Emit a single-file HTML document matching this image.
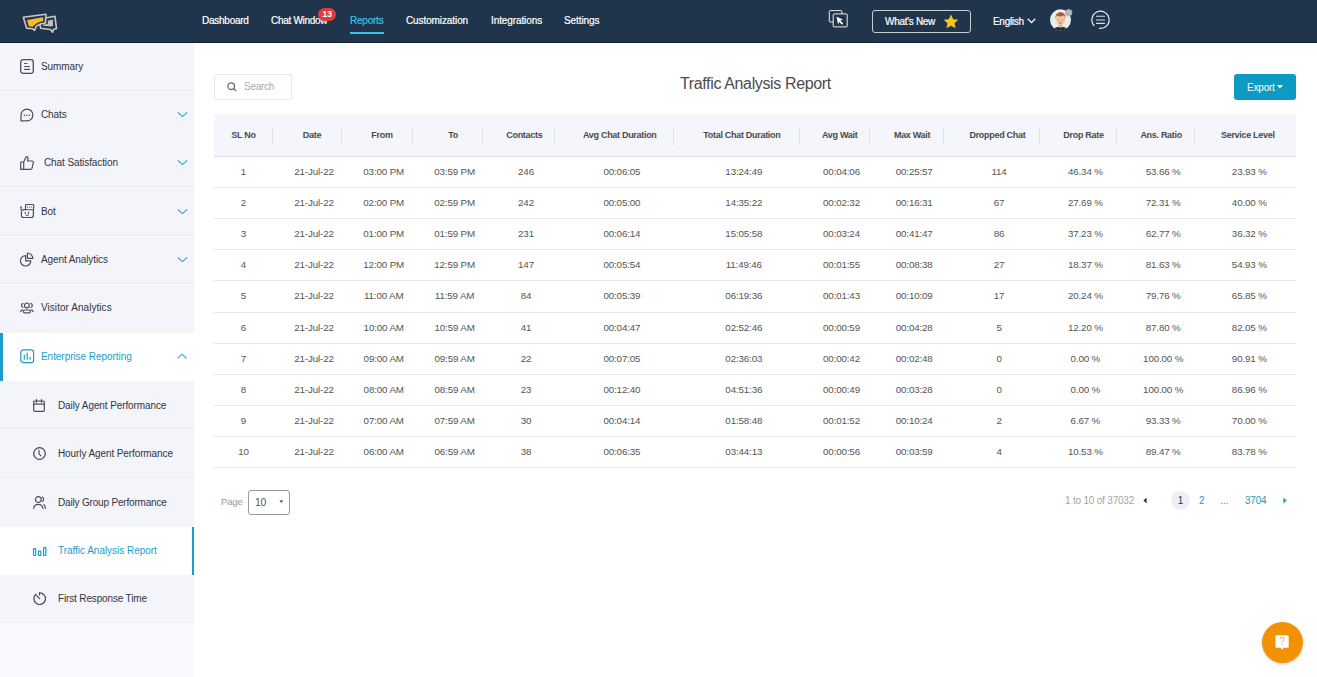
<!DOCTYPE html>
<html><head><meta charset="utf-8">
<style>
*{margin:0;padding:0;box-sizing:border-box}
html,body{width:1317px;height:677px;overflow:hidden;background:#fff;font-family:"Liberation Sans",sans-serif}
.a{position:absolute}
.nav{top:15.2px;font-size:10px;letter-spacing:-0.1px;color:#fff;line-height:12px;white-space:nowrap;-webkit-text-stroke:0.2px currentColor}
.st{font-size:10px;color:#3a3a46;white-space:nowrap;line-height:12px;letter-spacing:-0.1px}
.th{top:130px;font-size:9px;font-weight:bold;color:#4a4a4a;line-height:11px;letter-spacing:-0.3px;white-space:nowrap;width:200px;text-align:center}
.td{font-size:9.8px;letter-spacing:-0.15px;color:#555;line-height:11px;white-space:nowrap;width:200px;text-align:center}
.dv{top:128px;width:1px;height:17px;background:#e2e2e6}
.hl{left:214px;width:1082px;height:1px;background:#e6e6e6}
</style></head><body>
<div class="a" style="left:0;top:0;width:1317px;height:42px;background:#20354b"></div>
<div class="a" style="left:0;top:42px;width:1317px;height:1px;background:#0d2136"></div>
<div class="a nav" style="left:202px;letter-spacing:-0.25px;">Dashboard</div>
<div class="a nav" style="left:271px;letter-spacing:-0.3px;">Chat Window</div>
<div class="a nav" style="left:350px;color:#33c3e8;letter-spacing:-0.23px;">Reports</div>
<div class="a nav" style="left:406px;">Customization</div>
<div class="a nav" style="left:491px;">Integrations</div>
<div class="a nav" style="left:564px;">Settings</div>
<div class="a" style="left:350px;top:32px;width:34px;height:2px;background:#33c3e8"></div>
<div class="a" style="left:318px;top:8px;width:18px;height:13px;border-radius:7px;background:#e53a3a;color:#fff;font-size:9px;font-weight:bold;text-align:center;line-height:13px;letter-spacing:-0.3px">13</div>
<svg class="a" style="left:18px;top:8px" width="44" height="30" viewBox="0 0 993 677" fill="none" stroke-linejoin="round"><path d="M120 210L630 140L635 340L500 372L420 400L372 505L330 468L195 455Z" fill="#20354b" stroke="#c8c8c8" stroke-width="36"/><path d="M205 272L565 208L570 292L470 322L400 362L330 425L240 405Z" fill="#fbb828"/><path d="M621 226L833 185L869 465L801 485L781 546L734 485L510 458L497 361L621 339Z" fill="#20354b" stroke="#c8c8c8" stroke-width="36"/><path d="M673 289L785 260L794 402L756 417L564 402L564 375L673 361Z" fill="#c0c0c0"/></svg>
<svg class="a" style="left:827px;top:9px" width="22" height="20" viewBox="0 0 22 20" fill="none"><rect x="2.3" y="1.6" width="12.6" height="11.4" rx="0.9" stroke="#ece8dc" stroke-width="1"/><rect x="6.2" y="4.9" width="14" height="13" rx="0.9" fill="#20354b" stroke="#f0f0f2" stroke-width="1"/><path d="M9.5 7.8L16 10.6L13.3 11.6L16.2 14.5L15 15.7L12.1 12.8L11.1 15.5Z" fill="#fff"/></svg>
<div class="a" style="left:872px;top:10px;width:99px;height:23px;border:1.3px solid #c9cdd2;border-radius:3px"></div>
<div class="a nav" style="left:885px;top:15.5px;letter-spacing:-0.3px">What&#39;s New</div>
<svg class="a" style="left:943px;top:14px" width="16" height="15" viewBox="0 0 24 23"><path d="M12 0.8l3.4 7.2 7.8 0.9-5.8 5.3 1.6 7.8L12 18.1 5 22l1.6-7.8L0.8 8.9l7.8-0.9z" fill="#f6c61c"/></svg>
<div class="a nav" style="left:993px;top:16px;letter-spacing:-0.3px">English</div>
<svg class="a" style="left:1027px;top:18px" width="9" height="6" viewBox="0 0 9 6" fill="none"><path d="M0.8 0.8L4.5 4.6L8.2 0.8" stroke="#fff" stroke-width="1.3"/></svg>
<svg class="a" style="left:1048px;top:8px" width="26" height="23" viewBox="0 0 26 23"><defs><clipPath id="av"><circle cx="12.5" cy="11.8" r="10.5"/></clipPath></defs><circle cx="12.5" cy="11.8" r="10.5" fill="#ececec"/><g clip-path="url(#av)"><path d="M4 24c0.5-3.5 3.8-5.2 8.5-5.2s8 1.7 8.5 5.2z" fill="#262a38"/><rect x="10.6" y="15" width="3.8" height="4.5" fill="#e2b48c"/><ellipse cx="12.5" cy="11.6" rx="4.6" ry="5.6" fill="#f1c9a2"/><path d="M7.6 11.2c-0.6-4.6 1.6-7 4.9-7s5.5 2.4 4.9 7c-0.3-1.8-1-3.2-2-3.6c-1 0.6-2.3 0.8-3.2 0.8s-2.2-0.3-3-0.9c-0.9 0.6-1.4 1.9-1.6 3.7z" fill="#a85a3a"/><circle cx="10.6" cy="12" r="0.5" fill="#5a4a40"/><circle cx="14.4" cy="12" r="0.5" fill="#5a4a40"/><rect x="11.2" y="14.6" width="2.6" height="0.9" rx="0.4" fill="#9a4a4a"/></g><circle cx="20.8" cy="4.6" r="3.4" fill="#b9b9b9" stroke="#9c8878" stroke-width="0.4"/></svg>
<svg class="a" style="left:1090px;top:9px" width="21" height="21" viewBox="0 0 21 21" fill="none"><path d="M4 16.5A8.6 8.6 0 1 1 9.5 19.4" stroke="#e8eaf0" stroke-width="1.2" stroke-linecap="round"/><path d="M6.5 7.3h8M6.5 11h8M6.5 14.4h8" stroke="#d8dae0" stroke-width="1.1" stroke-linecap="round"/></svg>
<div class="a" style="left:0;top:43px;width:194px;height:634px;background:#f9fafd"></div>
<div class="a" style="left:0;width:194px;top:43px;height:48px;background:#f4f5fb;border-bottom:1px solid #e9eaf0;"></div>
<svg class="a" style="left:20px;top:59px" width="14" height="15" viewBox="0 0 14 15" fill="none" stroke-linecap="round" stroke-linejoin="round"><rect x="0.7" y="0.7" width="12.6" height="13.6" rx="2.5" stroke="#4d4d55" stroke-width="1.3"/><path d="M4.5 4.5h2.5M4.5 7.5h5M4.5 10.3h5" stroke="#4d4d55" stroke-width="1.2"/></svg>
<div class="a st" style="left:41px;top:61px;color:#33333f;">Summary</div>
<div class="a" style="left:0;width:194px;top:92px;height:47px;background:#f4f5fb;"></div>
<svg class="a" style="left:20px;top:108px" width="14" height="14" viewBox="0 0 14 14" fill="none" stroke-linecap="round" stroke-linejoin="round"><path d="M1 7A5.95 5.95 0 1 1 7 12.95C5.5 12.95 4.5 12.6 3.5 12.8H1z" stroke="#4d4d55" stroke-width="1.2"/><circle cx="4.4" cy="7.2" r="0.75" fill="#4d4d55"/><circle cx="6.85" cy="7.2" r="0.75" fill="#4d4d55"/><circle cx="9.3" cy="7.2" r="0.75" fill="#4d4d55"/></svg>
<div class="a st" style="left:41px;top:109px;color:#33333f;">Chats</div>
<svg class="a" style="left:176.5px;top:111px" width="11" height="8" viewBox="0 0 11 8" fill="none"><path d="M0.8 1.4L5.5 5.6L10.2 1.4" stroke="#2f9fcc" stroke-width="1.1"/></svg>
<div class="a" style="left:0;width:194px;top:139px;height:48px;background:#f4f5fb;border-bottom:1px solid #e9eaf0;"></div>
<svg class="a" style="left:20px;top:155px" width="14" height="15" viewBox="0 0 14 15" fill="none" stroke-linecap="round" stroke-linejoin="round"><path d="M0.7 7h3v7.3h-3zM3.7 7l2.6-5.5c1.3 0 2 0.9 1.7 2.3L7.5 6h4.6c0.9 0 1.4 0.8 1.2 1.6l-1.2 5.5c-0.2 0.8-0.8 1.2-1.5 1.2H3.7" stroke="#4d4d55" stroke-width="1.2"/></svg>
<div class="a st" style="left:44px;top:157px;color:#33333f;">Chat Satisfaction</div>
<svg class="a" style="left:176.5px;top:159px" width="11" height="8" viewBox="0 0 11 8" fill="none"><path d="M0.8 1.4L5.5 5.6L10.2 1.4" stroke="#2f9fcc" stroke-width="1.1"/></svg>
<div class="a" style="left:0;width:194px;top:188px;height:48px;background:#f4f5fb;border-bottom:1px solid #e9eaf0;"></div>
<svg class="a" style="left:20px;top:204px" width="15" height="14" viewBox="0 0 15 14" fill="none" stroke-linecap="round" stroke-linejoin="round"><rect x="5.5" y="0.5" width="8.2" height="5.2" rx="0.9" stroke="#4d4d55" stroke-width="1.1"/><circle cx="7.5" cy="3.1" r="0.6" fill="#4d4d55"/><circle cx="9.6" cy="3.1" r="0.6" fill="#4d4d55"/><circle cx="11.7" cy="3.1" r="0.6" fill="#4d4d55"/><path d="M5.5 5.6H3.8a2.4 2.4 0 0 0-2.4 2.4v3.3a2.4 2.4 0 0 0 2.4 2.4h7.2a2.4 2.4 0 0 0 2.4-2.4V5.7" stroke="#4d4d55" stroke-width="1.2"/><path d="M1 3.2v2.6M5.3 8.4v1.2M8.6 8.4v1.2M6.3 11.2h1.9" stroke="#4d4d55" stroke-width="1.1"/><circle cx="1" cy="3" r="0.8" fill="#4d4d55"/></svg>
<div class="a st" style="left:41px;top:206px;color:#33333f;">Bot</div>
<svg class="a" style="left:176.5px;top:208px" width="11" height="8" viewBox="0 0 11 8" fill="none"><path d="M0.8 1.4L5.5 5.6L10.2 1.4" stroke="#2f9fcc" stroke-width="1.1"/></svg>
<div class="a" style="left:0;width:194px;top:237px;height:47px;background:#f4f5fb;border-bottom:1px solid #e9eaf0;"></div>
<svg class="a" style="left:20px;top:252px" width="15" height="15" viewBox="0 0 15 15" fill="none" stroke-linecap="round" stroke-linejoin="round"><path d="M5.6 3.6A5.2 5.2 0 1 0 10.8 8.8H5.6z" stroke="#4d4d55" stroke-width="1.2"/><path d="M7.4 1A5.4 5.4 0 0 1 12.8 6.4H7.4z" stroke="#4d4d55" stroke-width="1.2"/></svg>
<div class="a st" style="left:41px;top:254px;color:#33333f;">Agent Analytics</div>
<svg class="a" style="left:176.5px;top:256px" width="11" height="8" viewBox="0 0 11 8" fill="none"><path d="M0.8 1.4L5.5 5.6L10.2 1.4" stroke="#2f9fcc" stroke-width="1.1"/></svg>
<div class="a" style="left:0;width:194px;top:285px;height:48px;background:#f4f5fb;"></div>
<svg class="a" style="left:20px;top:301px" width="14" height="13" viewBox="0 0 14 13" fill="none" stroke-linecap="round" stroke-linejoin="round"><circle cx="6.9" cy="4.4" r="2.4" stroke="#4d4d55" stroke-width="1.2"/><rect x="3.4" y="9" width="7" height="2.9" rx="1.45" stroke="#4d4d55" stroke-width="1.2"/><path d="M2.9 2.4a2.2 2.2 0 0 0 0 4.1M10.9 2.4a2.2 2.2 0 0 1 0 4.1M0.7 10.6c0.2-0.9 0.9-1.5 1.8-1.7M13.1 10.6c-0.2-0.9-0.9-1.5-1.8-1.7" stroke="#4d4d55" stroke-width="1.2"/></svg>
<div class="a st" style="left:41px;top:302px;color:#33333f;letter-spacing:0.05px;">Visitor Analytics</div>
<div class="a" style="left:0;width:194px;top:333px;height:48px;background:#ffffff;"></div>
<svg class="a" style="left:20px;top:349px" width="15" height="15" viewBox="0 0 15 15" fill="none" stroke-linecap="round" stroke-linejoin="round"><rect x="0.8" y="0.8" width="12.8" height="12.9" rx="2.8" stroke="#1c9dc9" stroke-width="1.2"/><path d="M4.3 5.8v5M7.2 3.8v7M10.1 8v2.8" stroke="#1c9dc9" stroke-width="1.2" stroke-linecap="butt"/></svg>
<div class="a st" style="left:41px;top:351px;color:#1c9dc9;letter-spacing:-0.05px;">Enterprise Reporting</div>
<svg class="a" style="left:177px;top:352px" width="11" height="8" viewBox="0 0 11 8" fill="none"><path d="M0.5 6.3L5 2.2L9.5 6.3" stroke="#2a9fcc" stroke-width="1.1"/></svg>
<div class="a" style="left:0;width:194px;top:381px;height:48px;background:#f4f5fb;border-bottom:1px solid #e9eaf0;"></div>
<svg class="a" style="left:33px;top:399px" width="12" height="13" viewBox="0 0 12 13" fill="none" stroke-linecap="round" stroke-linejoin="round"><rect x="0.7" y="2" width="10.6" height="10.3" rx="1" stroke="#4d4d55" stroke-width="1.2"/><path d="M0.7 5.2h10.6M3.5 0.6v2.6M8.5 0.6v2.6" stroke="#4d4d55" stroke-width="1.2"/></svg>
<div class="a st" style="left:58px;top:400px;color:#33333f;">Daily Agent Performance</div>
<div class="a" style="left:0;width:194px;top:430px;height:48px;background:#f4f5fb;border-bottom:1px solid #e9eaf0;"></div>
<svg class="a" style="left:33px;top:447px" width="13" height="13" viewBox="0 0 13 13" fill="none" stroke-linecap="round" stroke-linejoin="round"><circle cx="6.5" cy="6.5" r="5.8" stroke="#4d4d55" stroke-width="1.3"/><path d="M6 3.2v3.6l2 2" stroke="#4d4d55" stroke-width="1.2"/></svg>
<div class="a st" style="left:58px;top:448px;color:#33333f;">Hourly Agent Performance</div>
<div class="a" style="left:0;width:194px;top:479px;height:48px;background:#f4f5fb;"></div>
<svg class="a" style="left:33px;top:496px" width="13" height="13" viewBox="0 0 13 13" fill="none" stroke-linecap="round" stroke-linejoin="round"><circle cx="5.3" cy="3.6" r="2.9" stroke="#4d4d55" stroke-width="1.2"/><path d="M0.7 12.3c0.3-2.4 2.2-4 4.6-4s4.3 1.6 4.6 4" stroke="#4d4d55" stroke-width="1.2"/><path d="M9.2 1a2.5 2.5 0 0 1 0 4.5M11 8.6c0.8 0.7 1.2 2 1.3 3.7" stroke="#4d4d55" stroke-width="1.2"/></svg>
<div class="a st" style="left:58px;top:497px;color:#33333f;letter-spacing:-0.18px;">Daily Group Performance</div>
<div class="a" style="left:0;width:194px;top:527px;height:48px;background:#ffffff;"></div>
<svg class="a" style="left:32px;top:547px" width="15" height="10" viewBox="0 0 15 10" fill="none" stroke-linecap="round" stroke-linejoin="round"><rect x="1.5" y="1.6" width="2.2" height="6.9" rx="0.4" stroke="#1c9dc9" stroke-width="1.2"/><rect x="6.5" y="4.2" width="2.4" height="4.3" rx="0.4" stroke="#1c9dc9" stroke-width="1.2"/><rect x="11.6" y="0.6" width="2.3" height="7.9" rx="0.4" stroke="#1c9dc9" stroke-width="1.2"/></svg>
<div class="a st" style="left:58px;top:545px;color:#1c9dc9;letter-spacing:-0.03px;">Traffic Analysis Report</div>
<div class="a" style="left:0;width:194px;top:575px;height:48px;background:#f4f5fb;"></div>
<svg class="a" style="left:33px;top:592px" width="13" height="13" viewBox="0 0 13 13" fill="none" stroke-linecap="round" stroke-linejoin="round"><path d="M3 2.2A5.8 5.8 0 1 0 6.5 0.9" stroke="#4d4d55" stroke-width="1.3"/><path d="M3.7 3.8l3 2.8M6.5 0.9v2" stroke="#4d4d55" stroke-width="1.2"/></svg>
<div class="a st" style="left:58px;top:593px;color:#33333f;letter-spacing:-0.15px;">First Response Time</div>
<div class="a" style="left:0;top:333px;width:3px;height:48px;background:#1c9dc9"></div>
<div class="a" style="left:192px;top:527px;width:2px;height:48px;background:#1c9dc9"></div>
<div class="a" style="left:214px;top:74px;width:78px;height:26px;border:1px solid #e6e6e6;border-radius:2px"></div>
<svg class="a" style="left:227px;top:82px" width="10" height="10" viewBox="0 0 10 10" fill="none"><circle cx="4.2" cy="4.2" r="3.3" stroke="#6a6a6a" stroke-width="1.3"/><path d="M6.6 6.6L8.9 8.9" stroke="#6a6a6a" stroke-width="1.3" stroke-linecap="round"/></svg>
<div class="a" style="left:244px;top:81px;font-size:10px;color:#aaa;line-height:11px;letter-spacing:-0.25px">Search</div>
<div class="a" style="left:680px;top:75px;font-size:16px;letter-spacing:-0.36px;color:#4c4c4c;line-height:17px;white-space:nowrap">Traffic Analysis Report</div>
<div class="a" style="left:1234px;top:74px;width:62px;height:26px;background:#0e9bc3;border-radius:3px"></div>
<div class="a" style="left:1247px;top:82px;font-size:10px;color:#fff;line-height:12px;letter-spacing:-0.2px">Export</div>
<svg class="a" style="left:1277px;top:85px" width="6" height="4" viewBox="0 0 6 4"><path d="M0 0h6L3 3.6z" fill="#fff"/></svg>
<div class="a" style="left:214px;top:114px;width:1082px;height:42px;background:#f4f6fb"></div>
<div class="a hl" style="top:156px;background:#dcdcdc"></div>
<div class="a th" style="left:143.5px">SL No</div>
<div class="a th" style="left:212.0px">Date</div>
<div class="a th" style="left:282.0px">From</div>
<div class="a th" style="left:353.2px">To</div>
<div class="a th" style="left:424.3px">Contacts</div>
<div class="a th" style="left:519.8px">Avg Chat Duration</div>
<div class="a th" style="left:641.9px">Total Chat Duration</div>
<div class="a th" style="left:739.7px">Avg Wait</div>
<div class="a th" style="left:812.1px">Max Wait</div>
<div class="a th" style="left:897.4px">Dropped Chat</div>
<div class="a th" style="left:983.5px">Drop Rate</div>
<div class="a th" style="left:1061.2px">Ans. Ratio</div>
<div class="a th" style="left:1147.8px">Service Level</div>
<div class="a dv" style="left:272px"></div>
<div class="a dv" style="left:341px"></div>
<div class="a dv" style="left:412px"></div>
<div class="a dv" style="left:482px"></div>
<div class="a dv" style="left:554px"></div>
<div class="a dv" style="left:673px"></div>
<div class="a dv" style="left:799px"></div>
<div class="a dv" style="left:869px"></div>
<div class="a dv" style="left:943px"></div>
<div class="a dv" style="left:1039px"></div>
<div class="a dv" style="left:1116px"></div>
<div class="a dv" style="left:1194px"></div>
<div class="a td" style="left:143.5px;top:166px">1</div>
<div class="a td" style="left:214.0px;top:166px">21-Jul-22</div>
<div class="a td" style="left:283.7px;top:166px">03:00 PM</div>
<div class="a td" style="left:354.6px;top:166px">03:59 PM</div>
<div class="a td" style="left:426.0px;top:166px">246</div>
<div class="a td" style="left:521.9px;top:166px">00:06:05</div>
<div class="a td" style="left:643.8px;top:166px">13:24:49</div>
<div class="a td" style="left:741.5px;top:166px">00:04:06</div>
<div class="a td" style="left:814.2px;top:166px">00:25:57</div>
<div class="a td" style="left:899.1px;top:166px">114</div>
<div class="a td" style="left:985.4px;top:166px">46.34 %</div>
<div class="a td" style="left:1063.2px;top:166px">53.66 %</div>
<div class="a td" style="left:1149.3px;top:166px">23.93 %</div>
<div class="a hl" style="top:187px"></div>
<div class="a td" style="left:143.5px;top:197px">2</div>
<div class="a td" style="left:214.0px;top:197px">21-Jul-22</div>
<div class="a td" style="left:283.7px;top:197px">02:00 PM</div>
<div class="a td" style="left:354.6px;top:197px">02:59 PM</div>
<div class="a td" style="left:426.0px;top:197px">242</div>
<div class="a td" style="left:521.9px;top:197px">00:05:00</div>
<div class="a td" style="left:643.8px;top:197px">14:35:22</div>
<div class="a td" style="left:741.5px;top:197px">00:02:32</div>
<div class="a td" style="left:814.2px;top:197px">00:16:31</div>
<div class="a td" style="left:899.1px;top:197px">67</div>
<div class="a td" style="left:985.4px;top:197px">27.69 %</div>
<div class="a td" style="left:1063.2px;top:197px">72.31 %</div>
<div class="a td" style="left:1149.3px;top:197px">40.00 %</div>
<div class="a hl" style="top:218px"></div>
<div class="a td" style="left:143.5px;top:228px">3</div>
<div class="a td" style="left:214.0px;top:228px">21-Jul-22</div>
<div class="a td" style="left:283.7px;top:228px">01:00 PM</div>
<div class="a td" style="left:354.6px;top:228px">01:59 PM</div>
<div class="a td" style="left:426.0px;top:228px">231</div>
<div class="a td" style="left:521.9px;top:228px">00:06:14</div>
<div class="a td" style="left:643.8px;top:228px">15:05:58</div>
<div class="a td" style="left:741.5px;top:228px">00:03:24</div>
<div class="a td" style="left:814.2px;top:228px">00:41:47</div>
<div class="a td" style="left:899.1px;top:228px">86</div>
<div class="a td" style="left:985.4px;top:228px">37.23 %</div>
<div class="a td" style="left:1063.2px;top:228px">62.77 %</div>
<div class="a td" style="left:1149.3px;top:228px">36.32 %</div>
<div class="a hl" style="top:249px"></div>
<div class="a td" style="left:143.5px;top:259px">4</div>
<div class="a td" style="left:214.0px;top:259px">21-Jul-22</div>
<div class="a td" style="left:283.7px;top:259px">12:00 PM</div>
<div class="a td" style="left:354.6px;top:259px">12:59 PM</div>
<div class="a td" style="left:426.0px;top:259px">147</div>
<div class="a td" style="left:521.9px;top:259px">00:05:54</div>
<div class="a td" style="left:643.8px;top:259px">11:49:46</div>
<div class="a td" style="left:741.5px;top:259px">00:01:55</div>
<div class="a td" style="left:814.2px;top:259px">00:08:38</div>
<div class="a td" style="left:899.1px;top:259px">27</div>
<div class="a td" style="left:985.4px;top:259px">18.37 %</div>
<div class="a td" style="left:1063.2px;top:259px">81.63 %</div>
<div class="a td" style="left:1149.3px;top:259px">54.93 %</div>
<div class="a hl" style="top:280px"></div>
<div class="a td" style="left:143.5px;top:290px">5</div>
<div class="a td" style="left:214.0px;top:290px">21-Jul-22</div>
<div class="a td" style="left:283.7px;top:290px">11:00 AM</div>
<div class="a td" style="left:354.6px;top:290px">11:59 AM</div>
<div class="a td" style="left:426.0px;top:290px">84</div>
<div class="a td" style="left:521.9px;top:290px">00:05:39</div>
<div class="a td" style="left:643.8px;top:290px">06:19:36</div>
<div class="a td" style="left:741.5px;top:290px">00:01:43</div>
<div class="a td" style="left:814.2px;top:290px">00:10:09</div>
<div class="a td" style="left:899.1px;top:290px">17</div>
<div class="a td" style="left:985.4px;top:290px">20.24 %</div>
<div class="a td" style="left:1063.2px;top:290px">79.76 %</div>
<div class="a td" style="left:1149.3px;top:290px">65.85 %</div>
<div class="a hl" style="top:312px"></div>
<div class="a td" style="left:143.5px;top:322px">6</div>
<div class="a td" style="left:214.0px;top:322px">21-Jul-22</div>
<div class="a td" style="left:283.7px;top:322px">10:00 AM</div>
<div class="a td" style="left:354.6px;top:322px">10:59 AM</div>
<div class="a td" style="left:426.0px;top:322px">41</div>
<div class="a td" style="left:521.9px;top:322px">00:04:47</div>
<div class="a td" style="left:643.8px;top:322px">02:52:46</div>
<div class="a td" style="left:741.5px;top:322px">00:00:59</div>
<div class="a td" style="left:814.2px;top:322px">00:04:28</div>
<div class="a td" style="left:899.1px;top:322px">5</div>
<div class="a td" style="left:985.4px;top:322px">12.20 %</div>
<div class="a td" style="left:1063.2px;top:322px">87.80 %</div>
<div class="a td" style="left:1149.3px;top:322px">82.05 %</div>
<div class="a hl" style="top:343px"></div>
<div class="a td" style="left:143.5px;top:353px">7</div>
<div class="a td" style="left:214.0px;top:353px">21-Jul-22</div>
<div class="a td" style="left:283.7px;top:353px">09:00 AM</div>
<div class="a td" style="left:354.6px;top:353px">09:59 AM</div>
<div class="a td" style="left:426.0px;top:353px">22</div>
<div class="a td" style="left:521.9px;top:353px">00:07:05</div>
<div class="a td" style="left:643.8px;top:353px">02:36:03</div>
<div class="a td" style="left:741.5px;top:353px">00:00:42</div>
<div class="a td" style="left:814.2px;top:353px">00:02:48</div>
<div class="a td" style="left:899.1px;top:353px">0</div>
<div class="a td" style="left:985.4px;top:353px">0.00 %</div>
<div class="a td" style="left:1063.2px;top:353px">100.00 %</div>
<div class="a td" style="left:1149.3px;top:353px">90.91 %</div>
<div class="a hl" style="top:374px"></div>
<div class="a td" style="left:143.5px;top:384px">8</div>
<div class="a td" style="left:214.0px;top:384px">21-Jul-22</div>
<div class="a td" style="left:283.7px;top:384px">08:00 AM</div>
<div class="a td" style="left:354.6px;top:384px">08:59 AM</div>
<div class="a td" style="left:426.0px;top:384px">23</div>
<div class="a td" style="left:521.9px;top:384px">00:12:40</div>
<div class="a td" style="left:643.8px;top:384px">04:51:36</div>
<div class="a td" style="left:741.5px;top:384px">00:00:49</div>
<div class="a td" style="left:814.2px;top:384px">00:03:28</div>
<div class="a td" style="left:899.1px;top:384px">0</div>
<div class="a td" style="left:985.4px;top:384px">0.00 %</div>
<div class="a td" style="left:1063.2px;top:384px">100.00 %</div>
<div class="a td" style="left:1149.3px;top:384px">86.96 %</div>
<div class="a hl" style="top:405px"></div>
<div class="a td" style="left:143.5px;top:415px">9</div>
<div class="a td" style="left:214.0px;top:415px">21-Jul-22</div>
<div class="a td" style="left:283.7px;top:415px">07:00 AM</div>
<div class="a td" style="left:354.6px;top:415px">07:59 AM</div>
<div class="a td" style="left:426.0px;top:415px">30</div>
<div class="a td" style="left:521.9px;top:415px">00:04:14</div>
<div class="a td" style="left:643.8px;top:415px">01:58:48</div>
<div class="a td" style="left:741.5px;top:415px">00:01:52</div>
<div class="a td" style="left:814.2px;top:415px">00:10:24</div>
<div class="a td" style="left:899.1px;top:415px">2</div>
<div class="a td" style="left:985.4px;top:415px">6.67 %</div>
<div class="a td" style="left:1063.2px;top:415px">93.33 %</div>
<div class="a td" style="left:1149.3px;top:415px">70.00 %</div>
<div class="a hl" style="top:436px"></div>
<div class="a td" style="left:143.5px;top:446px">10</div>
<div class="a td" style="left:214.0px;top:446px">21-Jul-22</div>
<div class="a td" style="left:283.7px;top:446px">06:00 AM</div>
<div class="a td" style="left:354.6px;top:446px">06:59 AM</div>
<div class="a td" style="left:426.0px;top:446px">38</div>
<div class="a td" style="left:521.9px;top:446px">00:06:35</div>
<div class="a td" style="left:643.8px;top:446px">03:44:13</div>
<div class="a td" style="left:741.5px;top:446px">00:00:56</div>
<div class="a td" style="left:814.2px;top:446px">00:03:59</div>
<div class="a td" style="left:899.1px;top:446px">4</div>
<div class="a td" style="left:985.4px;top:446px">10.53 %</div>
<div class="a td" style="left:1063.2px;top:446px">89.47 %</div>
<div class="a td" style="left:1149.3px;top:446px">83.78 %</div>
<div class="a hl" style="top:467px"></div>
<div class="a" style="left:221px;top:496px;font-size:9.5px;color:#999;line-height:11px;letter-spacing:-0.15px">Page</div>
<div class="a" style="left:248px;top:490px;width:42px;height:25px;border:1px solid #9a9a9a;border-radius:3px"></div>
<div class="a" style="left:255px;top:497px;font-size:10.5px;color:#555;line-height:11px;letter-spacing:-0.3px">10</div>
<svg class="a" style="left:279px;top:500px" width="5" height="3" viewBox="0 0 5 3"><path d="M0.4 0.5h3.8L2.3 2.8z" fill="#333"/></svg>
<div class="a" style="left:1065px;top:495px;font-size:10px;color:#a4a4a4;line-height:11px;white-space:nowrap;letter-spacing:-0.2px">1 to 10 of 37032</div>
<svg class="a" style="left:1143px;top:497px" width="4" height="7" viewBox="0 0 4 7"><path d="M3.6 0.6v5.8L0.4 3.5z" fill="#333"/></svg>
<div class="a" style="left:1171px;top:491px;width:19px;height:19px;border-radius:50%;background:#eceffb"></div>
<div class="a" style="left:1171px;top:495px;width:19px;text-align:center;font-size:10px;color:#333;line-height:11px">1</div>
<div class="a" style="left:1199px;top:495px;font-size:10px;color:#1b99c4;line-height:11px">2</div>
<div class="a" style="left:1220px;top:495px;font-size:10px;color:#1b99c4;line-height:11px">...</div>
<div class="a" style="left:1245px;top:495px;font-size:10px;color:#1b99c4;line-height:11px;letter-spacing:-0.2px">3704</div>
<svg class="a" style="left:1283px;top:497px" width="4" height="7" viewBox="0 0 4 7"><path d="M0.4 0.6v5.8L3.6 3.5z" fill="#1b99c4"/></svg>
<div class="a" style="left:1262px;top:622px;width:41px;height:41px;border-radius:50%;background:#f39200;box-shadow:0 1px 3px rgba(0,0,0,0.18)"></div>
<svg class="a" style="left:1275px;top:635px" width="15" height="16" viewBox="0 0 15 16"><path d="M1.8 0.3h10.6a1.3 1.3 0 0 1 1.3 1.3v10.2a0.9 0.9 0 0 1-0.9 0.9H8.6L7.1 14.9L5.6 12.7H1.4a0.9 0.9 0 0 1-0.9-0.9V1.6A1.3 1.3 0 0 1 1.8 0.3z" fill="#fff"/><text x="7.1" y="10.3" font-size="10.5" text-anchor="middle" fill="#f6b35a" font-family="Liberation Sans">?</text></svg>
</body></html>
